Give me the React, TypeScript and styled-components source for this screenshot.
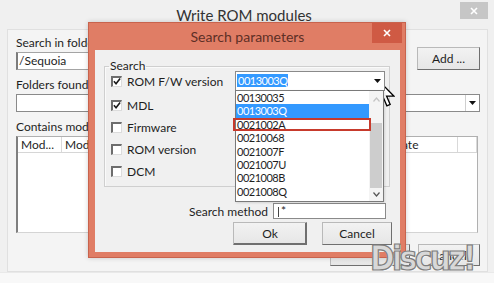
import React from "react";
import styled, { createGlobalStyle } from "styled-components";

const GlobalStyle = createGlobalStyle`
  html, body { margin: 0; padding: 0; background: #f2f2f2; }
  body { font-family: "Lato", "Noto Sans", sans-serif; font-size: 12px; color: #1e1e1e; }
  * { box-sizing: border-box; }
`;

const Screen = styled.div`
  position: relative;
  width: 494px;
  height: 283px;
  overflow: hidden;
  background: #f0f0f0;
  display: flex;
  flex-direction: column;
`;

const WindowTitleBar = styled.div`
  height: 29px;
  flex: none;
  display: grid;
  grid-template-columns: 1fr auto 1fr;
  align-items: start;
  padding-right: 6px;
`;

const WindowTitle = styled.div`
  grid-column: 2;
  margin-top: 6px;
  font-size: 15px;
  line-height: 18px;
  color: #333;
`;

const CloseButton = styled.div<{ $tone: "grey" | "red" }>`
  grid-column: 3;
  justify-self: end;
  display: flex;
  align-items: center;
  justify-content: center;
  width: ${(p) => (p.$tone === "grey" ? "28px" : "30px")};
  height: ${(p) => (p.$tone === "grey" ? "17px" : "20px")};
  margin-top: ${(p) => (p.$tone === "grey" ? "2px" : "0")};
  margin-right: ${(p) => (p.$tone === "grey" ? "0" : "-2px")};
  background: ${(p) => (p.$tone === "grey" ? "#c6c6c6" : "#cf5a44")};
`;

const Client = styled.div`
  flex: none;
  margin: 0 6px 0 7px;
  height: 243px;
  background: #f4f4f4;
  border: 1px solid #e0e0e0;
  padding: 5px 7px 0 8px;
  display: flex;
  flex-direction: column;
`;

const Footer = styled.div`
  flex: 1;
  background: #f8f8f8;
  border-top: 1px solid #e9e9e9;
`;

const FolderGrid = styled.div`
  display: grid;
  grid-template-columns: 1fr 63px;
  grid-template-rows: 16px 18px;
  row-gap: 1px;
  column-gap: 12px;
`;

const Label = styled.div<{ $gap?: number }>`
  height: 16px;
  line-height: 16px;
  margin-top: ${(p) => p.$gap ?? 0}px;
  white-space: nowrap;
`;

const TextField = styled.div`
  grid-column: 1;
  grid-row: 2;
  height: 18px;
  background: #fff;
  border: 1px solid #a4a4a4;
  border-left: 2px solid #7c7c7c;
  padding-left: 1px;
  line-height: 16px;
`;

const Button = styled.div<{ $w: number; $h?: number; $default?: boolean }>`
  flex: none;
  width: ${(p) => p.$w}px;
  height: ${(p) => p.$h ?? 23}px;
  display: flex;
  align-items: center;
  justify-content: center;
  background: linear-gradient(#f2f2f2, #e6e6e6);
  border: 1px solid #b9b9b9;
  border-right-color: #6f6f6f;
  border-bottom-color: #6f6f6f;
  box-shadow: ${(p) => (p.$default ? "inset -1px -1px 0 #6f6f6f" : "none")};
  color: #1e1e1e;
`;

const AddButton = styled(Button)`
  grid-column: 2;
  grid-row: 1 / span 2;
  align-self: end;
`;

const ComboBox = styled.div<{ $h: number }>`
  position: relative;
  height: ${(p) => p.$h}px;
  background: #fff;
  border: 1px solid #8a8a8a;
  display: flex;
  align-items: center;
`;

const ComboText = styled.div`
  flex: 1;
  padding-left: 1px;
  line-height: 14px;
  white-space: nowrap;
  overflow: hidden;
`;

const ComboArrow = styled.div<{ $boxed?: boolean }>`
  flex: none;
  width: 14px;
  align-self: stretch;
  display: flex;
  align-items: center;
  justify-content: center;
  border-left: ${(p) => (p.$boxed ? "1px solid #cfcfcf" : "none")};
`;

const Table = styled.div`
  margin-top: 1px;
  margin-right: 2px;
  height: 97px;
  background: #fff;
  border: 1px solid #b0b0b0;
  border-left: 2px solid #7f7f7f;
  border-bottom-color: #d4d4d4;
`;

const TableHeader = styled.div`
  display: grid;
  grid-template-columns: 44px 128px 110px 90px 68px 1fr;
  height: 16px;
  border-bottom: 1px solid #d6d6d6;
`;

const HeaderCell = styled.div`
  padding: 0 5px 0 3px;
  line-height: 15px;
  border-right: 1px solid #d9d9d9;
  white-space: nowrap;
  overflow: hidden;
`;

const ButtonRow = styled.div<{ $gap: number; $top: number; $right?: number }>`
  display: flex;
  justify-content: flex-end;
  gap: ${(p) => p.$gap}px;
  margin-top: ${(p) => p.$top}px;
  padding-right: ${(p) => p.$right ?? 0}px;
`;

/* ---------- dialog ---------- */

const Dialog = styled.div`
  position: absolute;
  left: 88px;
  top: 22px;
  width: 318px;
  height: 236px;
  background: #e07d65;
  border: 1px solid #c8634d;
  padding: 0 5px 5px 6px;
  display: flex;
  flex-direction: column;
  box-shadow: 0 0 5px rgba(0, 0, 0, 0.18);
`;

const DialogTitleBar = styled.div`
  height: 27px;
  flex: none;
  display: grid;
  grid-template-columns: 1fr auto 1fr;
  align-items: start;
`;

const DialogTitle = styled.div`
  grid-column: 2;
  margin-top: 5px;
  font-size: 14px;
  line-height: 17px;
  color: #5e2f25;
`;

const DialogBody = styled.div`
  flex: 1;
  background: #f0f0f0;
  padding: 0 8px 0 9px;
  display: flex;
  flex-direction: column;
`;

const GroupBox = styled.fieldset`
  margin: 11px 2px 0 0;
  padding: 0 4px 4px 6px;
  border: 1px solid #cfcfcf;
  box-shadow: inset 1px 1px 0 #fafafa;
  min-width: 0;
`;

const Legend = styled.legend`
  margin-left: -2px;
  padding: 0 1px;
  line-height: 10px;
  font-size: 12px;
`;

const OptionRow = styled.div<{ $h: number; $top?: number }>`
  height: ${(p) => p.$h}px;
  margin-top: ${(p) => p.$top ?? 0}px;
  display: flex;
  align-items: center;
  justify-content: space-between;
`;

const CheckItem = styled.label`
  display: flex;
  align-items: center;
  gap: 5px;
  white-space: nowrap;
`;

const CheckBox = styled.span`
  flex: none;
  width: 11px;
  height: 11px;
  background: #fff;
  border-top: 2px solid #6d6d6d;
  border-left: 2px solid #6d6d6d;
  border-right: 1px solid #dcdcdc;
  border-bottom: 1px solid #dcdcdc;
  display: flex;
  align-items: center;
  justify-content: center;
`;

const VersionCombo = styled(ComboBox)`
  width: 150px;
  z-index: 2;
`;

const Selected = styled.span`
  background: #3399ff;
  color: #fff;
  font-size: 11px;
  letter-spacing: -0.5px;
  padding: 0 1px;
`;

const DropList = styled.div`
  position: absolute;
  left: -1px;
  top: 100%;
  width: 149px;
  height: 112px;
  background: #fff;
  border: 1px solid #7a7a7a;
  display: flex;
  box-shadow: 1px 1px 2px rgba(0, 0, 0, 0.12);
`;

const ListItems = styled.div`
  flex: 1;
  display: flex;
  flex-direction: column;
`;

const ListItem = styled.div<{ $selected?: boolean; $marked?: boolean }>`
  position: relative;
  height: 13.4px;
  line-height: 13.4px;
  padding-left: 1px;
  font-size: 11px;
  letter-spacing: -0.5px;
  background: ${(p) => (p.$selected ? "#3399ff" : "transparent")};
  color: ${(p) => (p.$selected ? "#fff" : "#1e1e1e")};
  &::after {
    content: "";
    display: ${(p) => (p.$marked ? "block" : "none")};
    position: absolute;
    left: -3px;
    right: -2px;
    top: 0;
    bottom: 0;
    border: 2px solid #c73a2c;
  }
`;

const ScrollBar = styled.div`
  flex: none;
  width: 14px;
  display: flex;
  flex-direction: column;
  background: #f4f4f4;
`;

const ScrollButton = styled.div<{ $h: number }>`
  height: ${(p) => p.$h}px;
  display: flex;
  align-items: center;
  justify-content: center;
`;

const ScrollTrack = styled.div`
  flex: 1;
  padding: 15px 1px 0 1px;
`;

const Thumb = styled.div`
  height: 65px;
  background: #cdcdcd;
`;

const MethodRow = styled.div`
  margin-top: 16px;
  padding-right: 6px;
  display: flex;
  justify-content: flex-end;
  align-items: center;
  gap: 5px;
`;

const MethodCombo = styled(ComboBox)`
  width: 113px;
  z-index: 1;
`;

const Caret = styled.span`
  display: inline-block;
  width: 1px;
  height: 10px;
  background: #444;
  margin: 0 2px 0 3px;
  vertical-align: middle;
`;

/* ---------- overlays ---------- */

const Cursor = styled.svg`
  position: absolute;
  left: 377px;
  top: 79px;
`;

const Watermark = styled.div`
  position: absolute;
  left: 370px;
  top: 239px;
  font-family: "DejaVu Sans", sans-serif;
  font-weight: bold;
  font-stretch: condensed;
  font-size: 33px;
  letter-spacing: -2.6px;
  line-height: 40px;
  color: #d8d8d8;
  -webkit-text-stroke: 1.2px #7d7d7d;
  text-shadow: 1px 1px 0 rgba(255, 255, 255, 0.8);
`;

const Cross = ({ size = 8 }: { size?: number }) => (
  <svg width={size} height={size} viewBox="0 0 8 8">
    <path d="M1 1 L7 7 M7 1 L1 7" stroke="#fff" strokeWidth="1.6" />
  </svg>
);

const Tri = () => (
  <svg width="7" height="4" viewBox="0 0 7 4">
    <path d="M0 0 H7 L3.5 4 Z" fill="#111" />
  </svg>
);

const Chevron = ({ up, color }: { up?: boolean; color: string }) => (
  <svg width="7" height="5" viewBox="0 0 7 5">
    <path d={up ? "M0.5 4.5 L3.5 1 L6.5 4.5" : "M0.5 0.5 L3.5 4 L6.5 0.5"} fill="none" stroke={color} strokeWidth="1.2" />
  </svg>
);

const Check = ({ on }: { on?: boolean }) => (
  <CheckBox>
    {on && (
      <svg width="9" height="9" viewBox="0 0 9 9">
        <path d="M1 4.2 L3.4 7 L8 1" fill="none" stroke="#1a1a1a" strokeWidth="1.8" />
      </svg>
    )}
  </CheckBox>
);

const versions = ["00130035", "0013003Q", "0021002A", "00210068", "0021007F", "0021007U", "0021008B", "0021008Q"];

const options = [
  { label: "MDL", on: true },
  { label: "Firmware", on: false },
  { label: "ROM version", on: false },
  { label: "DCM", on: false },
];

export default function App() {
  return (
    <>
      <GlobalStyle />
      <Screen>
        <WindowTitleBar>
          <WindowTitle>Write ROM modules</WindowTitle>
          <CloseButton $tone="grey">
            <Cross />
          </CloseButton>
        </WindowTitleBar>

        <Client>
          <FolderGrid>
            <Label>Search in folder</Label>
            <TextField>/Sequoia</TextField>
            <AddButton $w={63}>Add ...</AddButton>
          </FolderGrid>

          <Label $gap={7}>Folders found</Label>
          <ComboBox $h={18} style={{ marginTop: 1 }}>
            <ComboText />
            <ComboArrow $boxed>
              <Tri />
            </ComboArrow>
          </ComboBox>

          <Label $gap={7}>Contains modules</Label>
          <Table>
            <TableHeader>
              <HeaderCell>Mod...</HeaderCell>
              <HeaderCell>Module name</HeaderCell>
              <HeaderCell>Path</HeaderCell>
              <HeaderCell>Size</HeaderCell>
              <HeaderCell>Date</HeaderCell>
              <HeaderCell />
            </TableHeader>
          </Table>

          <ButtonRow $gap={8} $top={11}>
            <Button $w={80} $h={22} aria-hidden />
            <Button $w={62} $h={22}>Cancel</Button>
          </ButtonRow>
        </Client>
        <Footer />

        <Dialog>
          <DialogTitleBar>
            <DialogTitle>Search parameters</DialogTitle>
            <CloseButton $tone="red">
              <Cross />
            </CloseButton>
          </DialogTitleBar>

          <DialogBody>
            <GroupBox>
              <Legend>Search</Legend>
              <OptionRow $h={20}>
                <CheckItem>
                  <Check on />
                  ROM F/W version
                </CheckItem>
                <VersionCombo $h={20}>
                  <ComboText>
                    <Selected>0013003Q</Selected>
                  </ComboText>
                  <ComboArrow>
                    <Tri />
                  </ComboArrow>
                  <DropList>
                    <ListItems>
                      {versions.map((v, i) => (
                        <ListItem key={v} $selected={i === 1} $marked={i === 2}>
                          {v}
                        </ListItem>
                      ))}
                    </ListItems>
                    <ScrollBar>
                      <ScrollButton $h={17}>
                        <Chevron up color="#c4c4c4" />
                      </ScrollButton>
                      <ScrollTrack>
                        <Thumb />
                      </ScrollTrack>
                      <ScrollButton $h={13}>
                        <Chevron color="#555" />
                      </ScrollButton>
                    </ScrollBar>
                  </DropList>
                </VersionCombo>
              </OptionRow>
              {options.map((o, i) => (
                <OptionRow key={o.label} $h={22} $top={i === 0 ? 3 : 0}>
                  <CheckItem>
                    <Check on={o.on} />
                    {o.label}
                  </CheckItem>
                </OptionRow>
              ))}
            </GroupBox>

            <MethodRow>
              <span>Search method</span>
              <MethodCombo $h={16}>
                <ComboText>
                  <Caret />*
                </ComboText>
              </MethodCombo>
            </MethodRow>

            <ButtonRow $gap={15} $top={3}>
              <Button $w={74} $default>Ok</Button>
              <Button $w={70}>Cancel</Button>
            </ButtonRow>
          </DialogBody>
        </Dialog>

        <Cursor width="18" height="28" viewBox="0 0 12.4 19.4">
          <path
            d="M0.6 0.6 L0.6 16 L4.2 12.5 L6.8 18.6 L9.1 17.6 L6.6 11.8 L11.6 11.8 Z"
            fill="#fff"
            stroke="#000"
            strokeWidth="0.9"
            strokeLinejoin="miter"
          />
        </Cursor>

        <Watermark>Discuz!</Watermark>
      </Screen>
    </>
  );
}
